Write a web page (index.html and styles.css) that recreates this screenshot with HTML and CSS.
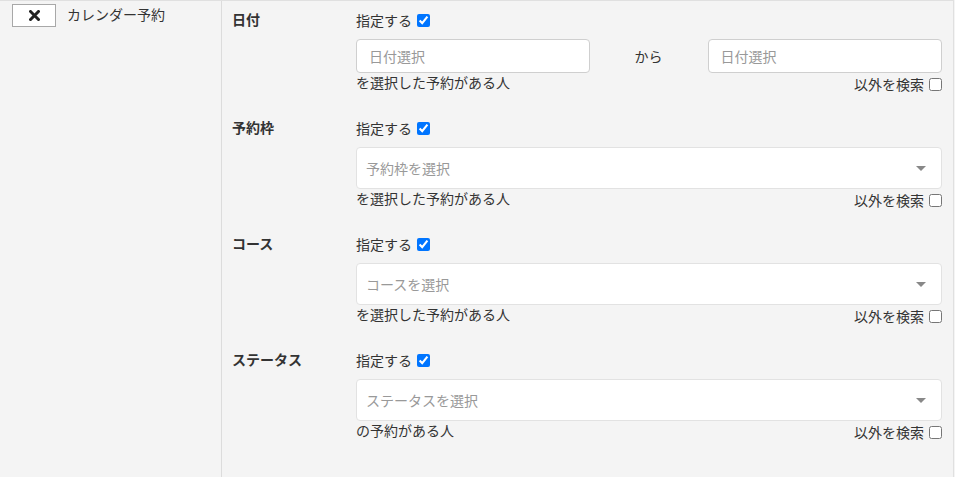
FILE: index.html
```html
<!DOCTYPE html>
<html lang="ja">
<head>
<meta charset="utf-8">
<link rel="stylesheet" href="styles.css">
<title>カレンダー予約</title>
</head>
<body>
<div class="panel">
  <div class="side">
    <button class="remove" type="button" aria-label="削除">
      <svg width="11" height="11" viewBox="0 0 11 11"><path d="M1.5 1.5 L9.5 9.5 M9.5 1.5 L1.5 9.5" stroke="#222" stroke-width="3" stroke-linecap="square" fill="none"/></svg>
    </button>
    <span class="side-title">カレンダー予約</span>
  </div>
  <div class="main">
    <div class="section">
      <div class="label">日付</div>
      <div class="content">
        <label class="check-row">指定する <input type="checkbox" checked></label>
        <div class="range">
          <div class="field input">日付選択</div>
          <div class="sep">から</div>
          <div class="field input">日付選択</div>
        </div>
        <div class="foot">
          <span>を選択した予約がある人</span>
          <label class="except">以外を検索 <input type="checkbox"></label>
        </div>
      </div>
    </div>
    <div class="section">
      <div class="label">予約枠</div>
      <div class="content">
        <label class="check-row">指定する <input type="checkbox" checked></label>
        <div class="field select">予約枠を選択<span class="caret"></span></div>
        <div class="foot">
          <span>を選択した予約がある人</span>
          <label class="except">以外を検索 <input type="checkbox"></label>
        </div>
      </div>
    </div>
    <div class="section">
      <div class="label">コース</div>
      <div class="content">
        <label class="check-row">指定する <input type="checkbox" checked></label>
        <div class="field select">コースを選択<span class="caret"></span></div>
        <div class="foot">
          <span>を選択した予約がある人</span>
          <label class="except">以外を検索 <input type="checkbox"></label>
        </div>
      </div>
    </div>
    <div class="section">
      <div class="label">ステータス</div>
      <div class="content">
        <label class="check-row">指定する <input type="checkbox" checked></label>
        <div class="field select">ステータスを選択<span class="caret"></span></div>
        <div class="foot">
          <span>の予約がある人</span>
          <label class="except">以外を検索 <input type="checkbox"></label>
        </div>
      </div>
    </div>
  </div>
</div>
</body>
</html>
```

FILE: styles.css
```css
html, body {
  margin: 0;
  padding: 0;
  height: 100%;
}
body {
  background: #f4f4f4;
  font-family: "Noto Sans CJK JP", "Noto Sans", sans-serif;
  font-size: 14px;
  color: #333;
}
.panel {
  display: flex;
  height: 100%;
  box-sizing: border-box;
  border-top: 1px solid #e0e0e0;
  border-right: 1px solid #e0e0e0;
  margin-right: 1px;
}
.side {
  width: 222px;
  border-right: 1px solid #dcdcdc;
  display: flex;
  align-items: flex-start;
  gap: 11px;
  padding: 3px 0 0 12px;
  box-sizing: border-box;
  flex: none;
}
.remove {
  width: 44px;
  height: 23px;
  padding: 0;
  margin: 0;
  background: #fff;
  border: 1px solid #a8a8a8;
  display: flex;
  align-items: center;
  justify-content: center;
}
.remove svg { display: block; }
.side-title {
  line-height: 20px;
}
.main {
  flex: 1;
  display: flex;
  flex-direction: column;
}
.section {
  display: flex;
  padding: 9px 11px 18px 10px;
}
.label {
  width: 124px;
  flex: none;
  font-weight: bold;
  line-height: 18px;
}
.content {
  flex: 1;
  display: flex;
  flex-direction: column;
}
.check-row {
  display: flex;
  align-items: center;
  line-height: 18px;
  height: 18px;
  margin-top: 1px;
  margin-bottom: 10px;
}
.check-row input, .except input {
  width: 13px;
  height: 13px;
  margin: 0 0 0 5px;
  accent-color: #0075ff;
}
.range {
  display: grid;
  grid-template-columns: 40% 20% 40%;
  align-items: center;
}
.sep {
  text-align: center;
  padding-right: 1px;
}
.field {
  background: #fff;
  color: #999;
  box-sizing: border-box;
  display: flex;
  align-items: center;
  padding: 0 12px;
  border-radius: 4px;
}
.input {
  height: 34px;
  border: 1px solid #cfcfcf;
}
.select {
  height: 42px;
  border: 1px solid #e2e2e2;
  padding: 0 9px;
  justify-content: space-between;
}
.caret {
  width: 0;
  height: 0;
  border-left: 5px solid transparent;
  border-right: 5px solid transparent;
  border-top: 5px solid #888;
  margin-right: 6px;
}
.foot {
  display: flex;
  justify-content: space-between;
  align-items: flex-start;
  line-height: 18px;
  height: 18px;
}
.except {
  display: flex;
  align-items: center;
  box-sizing: border-box;
  height: 18px;
  padding-top: 4px;
}
```
